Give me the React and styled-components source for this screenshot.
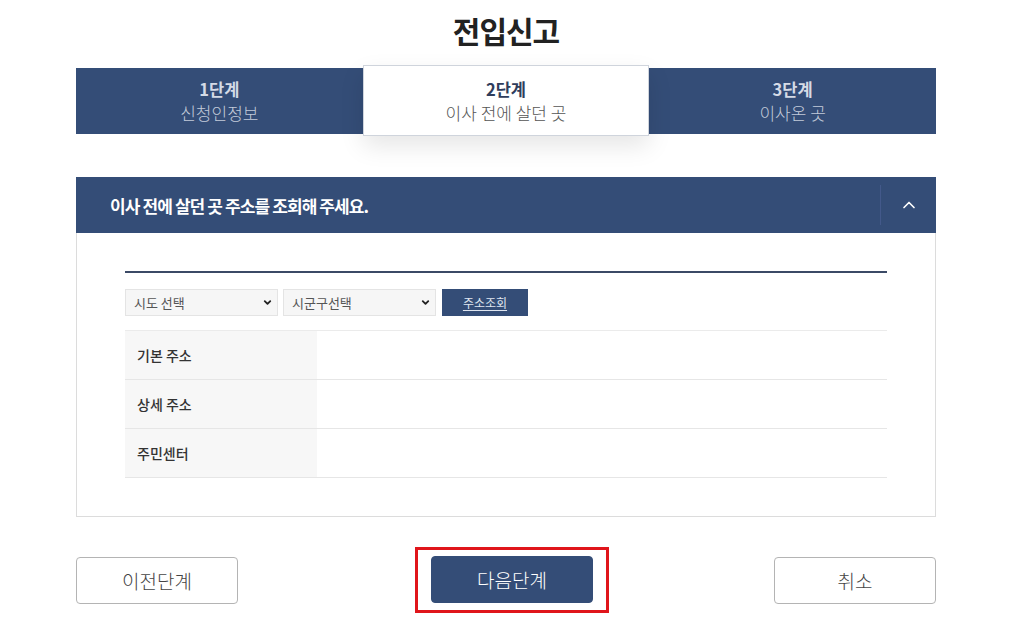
import React from 'react';
import styled, { createGlobalStyle } from 'styled-components';
import { ChevronDown, ChevronUp } from 'lucide-react';

const GlobalStyle = createGlobalStyle`
  body {
    margin: 0;
    background: #fff;
    font-family: "Noto Sans CJK KR", "Noto Sans", sans-serif;
    color: #333;
  }
`;

const navy = '#344d77';

const Page = styled.div`
  width: 860px;
  margin-left: 76px;
`;

const Title = styled.h1`
  margin: 0;
  height: 68px;
  line-height: 60px;
  text-align: center;
  font-size: 30px;
  font-weight: 700;
  color: #222;
  letter-spacing: -1px;
`;

const Steps = styled.div`
  display: grid;
  grid-template-columns: repeat(3, 1fr);
  height: 66px;
  background: ${navy};
`;

const Step = styled.div`
  display: flex;
  flex-direction: column;
  align-items: center;
  justify-content: center;
  background: ${p => (p.$active ? '#fff' : 'transparent')};
  border: ${p => (p.$active ? '1px solid #cfd4dc' : 'none')};
  margin: ${p => (p.$active ? '-3px 0 -2px' : '0')};
  box-shadow: ${p => (p.$active ? '0 10px 24px rgba(0,0,0,0.10)' : 'none')};
  position: relative;
  z-index: ${p => (p.$active ? 1 : 0)};
`;

const StepNo = styled.div`
  font-size: 16.5px;
  font-weight: 700;
  line-height: 24px;
  color: ${p => (p.$active ? '#2f3d5c' : '#d5dbe6')};
`;

const StepName = styled.div`
  font-size: 17px;
  font-weight: 300;
  line-height: 24px;
  color: ${p => (p.$active ? '#555' : '#c3cbda')};
`;

const Panel = styled.section`
  margin-top: 43px;
  border: 1px solid #dcdcdc;
  border-top: none;
`;

const PanelHead = styled.div`
  display: flex;
  align-items: center;
  height: 56px;
  margin: 0 -1px;
  background: ${navy};
`;

const PanelTitle = styled.h2`
  flex: 1;
  margin: 0;
  padding-left: 34px;
  font-size: 17px;
  font-weight: 700;
  color: #fff;
  letter-spacing: -0.9px;
`;

const Toggle = styled.button`
  display: flex;
  align-items: center;
  justify-content: center;
  width: 56px;
  height: 40px;
  padding: 0;
  border: none;
  border-left: 1px solid #43598a;
  background: transparent;
  color: #fff;
  cursor: pointer;
`;

const PanelBody = styled.div`
  padding: 38px 48px 38px 48px;
`;

const Rule = styled.div`
  height: 2px;
  background: #3b4a66;
`;

const SearchRow = styled.div`
  display: flex;
  gap: 5px;
  margin-top: 16px;
`;

const SelectWrap = styled.div`
  position: relative;
  width: 153px;
  height: 27px;
`;

const Select = styled.select`
  appearance: none;
  width: 100%;
  height: 100%;
  padding: 0 20px 0 8px;
  border: 1px solid #e4e4e4;
  background: #f6f6f6;
  font-family: inherit;
  font-size: 13px;
  color: #555;
  outline: none;
`;

const Caret = styled.span`
  position: absolute;
  right: 5px;
  top: 8px;
  display: flex;
  color: #222;
  pointer-events: none;
`;

const SearchButton = styled.button`
  width: 86px;
  height: 27px;
  margin-left: 1px;
  border: none;
  background: ${navy};
  color: #dfe5f0;
  font-family: inherit;
  font-size: 12px;
  text-decoration: underline;
  text-underline-offset: 2px;
  cursor: pointer;
`;

const Table = styled.div`
  margin-top: 14px;
  border-top: 1px solid #ebebeb;
`;

const Row = styled.div`
  display: grid;
  grid-template-columns: 192px 1fr;
  height: 48px;
  border-bottom: 1px solid #e6e6e6;
`;

const Label = styled.div`
  display: flex;
  align-items: center;
  padding-left: 12px;
  background: #f7f7f7;
  font-size: 14px;
  font-weight: 500;
  color: #333;
`;

const Value = styled.div``;

const Actions = styled.div`
  display: flex;
  align-items: center;
  justify-content: space-between;
  margin-top: 30px;
`;

const Highlight = styled.div`
  margin-left: 12px;
  padding: 6px 13px 7px;
  border: 3px solid #e0151b;
`;

const ActionButton = styled.button`
  width: 162px;
  height: 47px;
  border: 1px solid ${p => (p.$primary ? navy : '#b4b4b4')};
  border-radius: 4px;
  background: ${p => (p.$primary ? navy : '#fff')};
  color: ${p => (p.$primary ? '#fff' : '#444')};
  font-family: inherit;
  font-size: 19px;
  font-weight: 300;
  display: block;
  cursor: pointer;
`;

const steps = [
  { no: '1단계', name: '신청인정보' },
  { no: '2단계', name: '이사 전에 살던 곳', active: true },
  { no: '3단계', name: '이사온 곳' },
];

const rows = ['기본 주소', '상세 주소', '주민센터'];

export default function App() {
  return (
    <>
      <GlobalStyle />
      <Page>
        <Title>전입신고</Title>
        <Steps>
          {steps.map(s => (
            <Step key={s.no} $active={s.active}>
              <StepNo $active={s.active}>{s.no}</StepNo>
              <StepName $active={s.active}>{s.name}</StepName>
            </Step>
          ))}
        </Steps>

        <Panel>
          <PanelHead>
            <PanelTitle>이사 전에 살던 곳 주소를 조회해 주세요.</PanelTitle>
            <Toggle aria-label="접기">
              <ChevronUp size={20} strokeWidth={2} />
            </Toggle>
          </PanelHead>
          <PanelBody>
            <Rule />
            <SearchRow>
              <SelectWrap>
                <Select defaultValue="">
                  <option value="">시도 선택</option>
                </Select>
                <Caret><ChevronDown size={11} strokeWidth={4} /></Caret>
              </SelectWrap>
              <SelectWrap>
                <Select defaultValue="">
                  <option value="">시군구선택</option>
                </Select>
                <Caret><ChevronDown size={11} strokeWidth={4} /></Caret>
              </SelectWrap>
              <SearchButton>주소조회</SearchButton>
            </SearchRow>
            <Table>
              {rows.map(r => (
                <Row key={r}>
                  <Label>{r}</Label>
                  <Value />
                </Row>
              ))}
            </Table>
          </PanelBody>
        </Panel>

        <Actions>
          <ActionButton>이전단계</ActionButton>
          <Highlight>
            <ActionButton $primary>다음단계</ActionButton>
          </Highlight>
          <ActionButton>취소</ActionButton>
        </Actions>
      </Page>
    </>
  );
}
